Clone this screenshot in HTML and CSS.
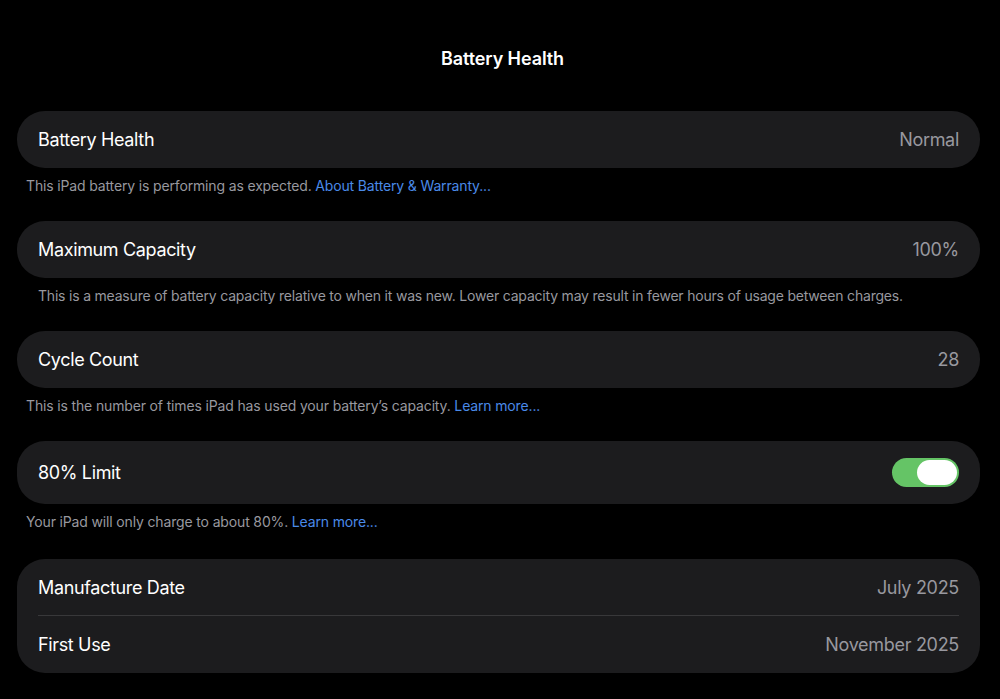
FILE: index.html
```html
<!DOCTYPE html>
<html lang="en">
<head>
    <meta charset="UTF-8">
    <meta name="viewport" content="width=device-width, initial-scale=1.0">
    <title>Battery Health</title>
    <link rel="stylesheet" href="styles.css">
</head>
<body>
    <h1 class="title">Battery Health</h1>

    <div class="group">
        <div class="card">
            <div class="row"><span class="label">Battery Health</span><span class="value">Normal</span></div>
        </div>
        <p class="note">This iPad battery is performing as expected. <a href="#">About Battery &amp; Warranty...</a></p>
    </div>

    <div class="group">
        <div class="card">
            <div class="row"><span class="label">Maximum Capacity</span><span class="value">100%</span></div>
        </div>
        <p class="note inset">This is a measure of battery capacity relative to when it was new. Lower capacity may result in fewer hours of usage between charges.</p>
    </div>

    <div class="group">
        <div class="card">
            <div class="row"><span class="label">Cycle Count</span><span class="value">28</span></div>
        </div>
        <p class="note">This is the number of times iPad has used your battery’s capacity. <a href="#">Learn more...</a></p>
    </div>

    <div class="group">
        <div class="card">
            <div class="row tall"><span class="label">80% Limit</span><span class="toggle on"><span class="knob"></span></span></div>
        </div>
        <p class="note spaced">Your iPad will only charge to about 80%. <a href="#">Learn more...</a></p>
    </div>

    <div class="group">
        <div class="card list">
            <div class="row"><span class="label">Manufacture Date</span><span class="value">July 2025</span></div>
            <div class="row"><span class="label">First Use</span><span class="value">November 2025</span></div>
        </div>
    </div>
</body>
</html>
```

FILE: styles.css
```css
body { margin: 0; background: #000; color: #fff; font-family: Inter, "Noto Sans", sans-serif; padding: 0 20px 0 17px; }
.title { margin: 0; padding: 48px 0 0 8px; height: 63px; font-size: 18px; font-weight: 600; text-align: center; letter-spacing: -0.1px; }
.card { background: #1c1c1e; border-radius: 28px; padding: 0 21px; }
.row { display: flex; justify-content: space-between; align-items: center; height: 57px; }
.row.tall { height: 63px; }
.list .row { height: 56px; }
.list .row + .row { border-top: 1px solid #38383a; height: 57px; }
.label { font-size: 18px; letter-spacing: -0.35px; }
.value { font-size: 18px; color: #98989f; letter-spacing: -0.3px; }
.note { margin: 0; padding: 9px 0 0 9px; height: 44px; font-size: 14px; color: #98989f; letter-spacing: -0.15px; line-height: 18px; }
.note.inset { padding-left: 21px; letter-spacing: -0.2px; }
.note.spaced { height: 46px; }
.note a { color: #4a8ae8; text-decoration: none; }
.toggle { width: 67px; height: 29px; border-radius: 15px; background: #e5e5ea; display: flex; align-items: center; padding: 0 2px; box-sizing: border-box; }
.toggle.on { background: #65c466; justify-content: flex-end; }
.knob { width: 40px; height: 25px; border-radius: 13px; background: #fff; }
```
